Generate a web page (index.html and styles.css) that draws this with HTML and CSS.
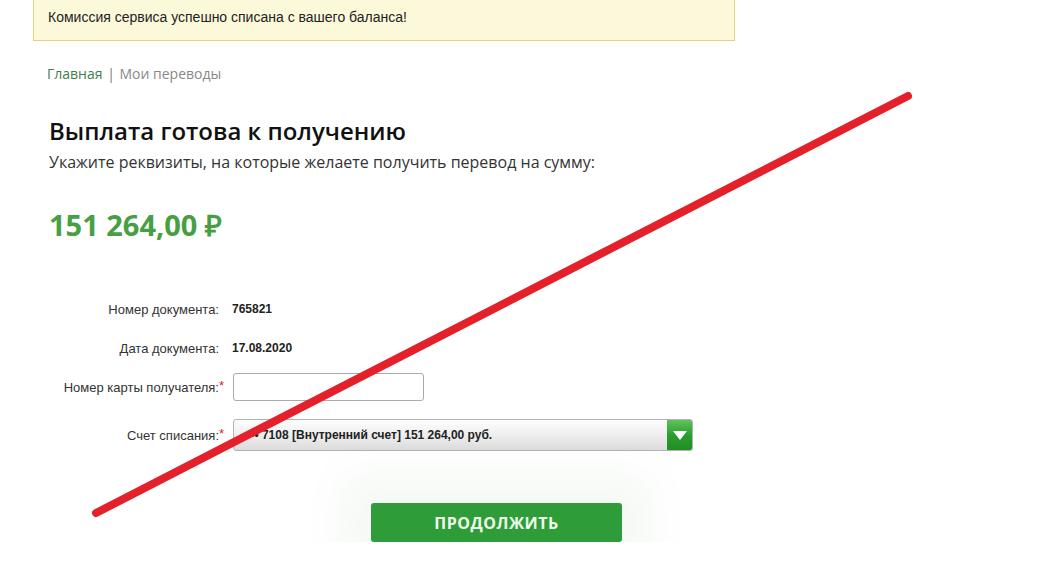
FILE: index.html
```html
<!DOCTYPE html>
<html lang="ru">
<head>
    <meta charset="UTF-8">
    <meta name="viewport" content="width=device-width, initial-scale=1.0">
    <title>Выплата готова к получению</title>
    <link rel="stylesheet" href="styles.css">
</head>
<body>

    <div class="page">
        <div class="alert">Комиссия сервиса успешно списана с вашего баланса!</div>

        <div class="crumbs">
            <a href="#" class="crumb-home">Главная</a>
            <span class="crumb-sep">|</span>
            <span class="crumb-current">Мои переводы</span>
        </div>

        <h1 class="title">Выплата готова к получению</h1>
        <p class="subtitle">Укажите реквизиты, на которые желаете получить перевод на сумму:</p>

        <div class="amount">151 264,00 ₽</div>

        <div class="form">
            <div class="row">
                <span class="label">Номер документа:</span>
                <span class="value">765821</span>
            </div>
            <div class="row">
                <span class="label">Дата документа:</span>
                <span class="value">17.08.2020</span>
            </div>
            <div class="row">
                <span class="label">Номер карты получателя:<i class="req">*</i></span>
                <input type="text" class="card-input">
            </div>
            <div class="row row-select">
                <span class="label">Счет списания:<i class="req">*</i></span>
                <div class="select">
                    <span class="select-text">••• 7108 [Внутренний счет] 151 264,00 руб.</span>
                    <span class="select-arrow">
                        <svg width="14" height="9" viewBox="0 0 14 9"><path d="M0 0 L14 0 L7 9 Z" fill="#fff"/></svg>
                    </span>
                </div>
            </div>
        </div>

        <div class="actions">
            <button class="continue-btn">ПРОДОЛЖИТЬ</button>
        </div>
    </div>

    <!-- red strike over the whole page -->
    <svg class="strike" width="1044" height="580" viewBox="0 0 1044 580">
        <line x1="96" y1="513" x2="908" y2="96" stroke="#e4202a" stroke-width="8" stroke-linecap="round"/>
    </svg>

</body>
</html>
```

FILE: styles.css
```css
body {
    margin: 0;
    background: #fff;
    font-family: "Open Sans", Arial, sans-serif;
    color: #222;
}

.page {
    padding-left: 33px;
    width: 702px;
}

.alert {
    box-sizing: border-box;
    height: 41px;
    padding: 9px 14px 0;
    background: #fcf9da;
    border: 1px solid #e2d77a;
    border-top: none;
    font-family: "Liberation Sans", Arial, sans-serif;
    font-size: 14px;
    line-height: 16px;
    color: #222;
}

.crumbs {
    margin-top: 23px;
    padding-left: 14px;
    font-size: 14px;
    line-height: 20px;
}

.crumb-home {
    color: #3f7d4c;
    text-decoration: none;
}

.crumb-sep {
    color: #777;
    margin: 0 1px;
}

.crumb-current {
    color: #888;
}

.title {
    margin: 31px 0 0 16px;
    font-size: 24px;
    font-weight: 600;
    line-height: 32px;
    color: #111;
}

.subtitle {
    margin: 4px 0 0 16px;
    font-size: 16px;
    line-height: 22px;
    color: #333;
}

.amount {
    margin: 34px 0 0 16px;
    font-size: 29px;
    font-weight: 700;
    line-height: 36px;
    color: #46a043;
}

.form {
    margin-top: 52px;
    display: flex;
    flex-direction: column;
    gap: 11px;
    font-family: "Liberation Sans", Arial, sans-serif;
    font-size: 12px;
}

.row {
    display: flex;
    align-items: center;
    height: 28px;
}

.row-select {
    height: 32px;
    margin-top: 7px;
}

.label {
    position: relative;
    width: 186px;
    text-align: right;
    font-size: 13px;
    color: #333;
}

.req {
    position: absolute;
    left: 100%;
    top: -2px;
    font-style: normal;
    color: #d0282e;
}

.value {
    margin-left: 13px;
    font-weight: bold;
    color: #222;
}

.card-input {
    box-sizing: border-box;
    margin-left: 14px;
    width: 191px;
    height: 28px;
    border: 1px solid #aaa;
    border-radius: 3px;
    outline: none;
}

.select {
    box-sizing: border-box;
    margin-left: 14px;
    width: 460px;
    height: 32px;
    display: flex;
    align-items: center;
    border: 1px solid #b3b3b3;
    border-radius: 3px;
    background: linear-gradient(#fdfdfd, #f0f0f0 45%, #dcdcdc);
    overflow: hidden;
}

.select-text {
    flex: 1;
    padding-left: 12px;
    font-weight: bold;
    color: #222;
}

.select-arrow {
    width: 25px;
    height: 100%;
    display: flex;
    align-items: center;
    justify-content: center;
    background: linear-gradient(#5ec35a, #2c9e30 50%, #1d8f24);
}

.actions {
    margin-top: 52px;
    padding-left: 338px;
}

.continue-btn {
    width: 251px;
    height: 39px;
    border: none;
    border-radius: 3px;
    background: #2e9c38;
    color: #effbea;
    font-family: "Open Sans", Arial, sans-serif;
    font-size: 16px;
    font-weight: 700;
    letter-spacing: 0.5px;
    cursor: pointer;
    box-shadow: 0 0 40px 30px rgba(60, 130, 60, 0.05);
}

.strike {
    position: absolute;
    top: 0;
    left: 0;
    pointer-events: none;
}
```
